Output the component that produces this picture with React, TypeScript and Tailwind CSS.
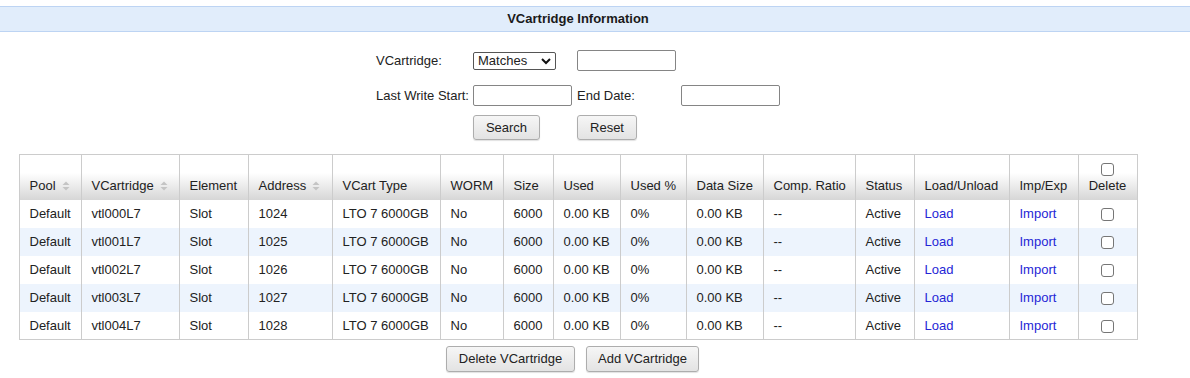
import React from 'react';

const font = { fontFamily: '"Liberation Sans", Arial, sans-serif' };

const columns = [
  { label: 'Pool', width: 62, sort: true },
  { label: 'VCartridge', width: 98, sort: true },
  { label: 'Element', width: 69 },
  { label: 'Address', width: 84, sort: true },
  { label: 'VCart Type', width: 108 },
  { label: 'WORM', width: 63 },
  { label: 'Size', width: 50 },
  { label: 'Used', width: 67 },
  { label: 'Used %', width: 66 },
  { label: 'Data Size', width: 77 },
  { label: 'Comp. Ratio', width: 92 },
  { label: 'Status', width: 59 },
  { label: 'Load/Unload', width: 95 },
  { label: 'Imp/Exp', width: 69 },
  { label: 'Delete', width: 59, check: true },
];

const rows = [0, 1, 2, 3, 4].map((i) => ({
  pool: 'Default',
  name: `vtl00${i}L7`,
  element: 'Slot',
  address: String(1024 + i),
  type: 'LTO 7 6000GB',
  worm: 'No',
  size: '6000',
  used: '0.00 KB',
  usedPct: '0%',
  dataSize: '0.00 KB',
  ratio: '--',
  status: 'Active',
}));

function SortIcon() {
  return (
    <svg width="8" height="10" viewBox="0 0 8 10" className="inline-block ml-[6px] align-[-1px]">
      <path d="M4 0.5 L7.5 4 L0.5 4 Z" fill="#c4c4c4" />
      <path d="M4 9.5 L7.5 6 L0.5 6 Z" fill="#c4c4c4" />
    </svg>
  );
}

function Checkbox() {
  return (
    <span className="inline-block w-[13px] h-[13px] border border-[#767676] rounded-[3px] bg-white align-middle" />
  );
}

function Button({ children, className }: { children: React.ReactNode; className?: string }) {
  return (
    <button
      className={
        'h-[25px] px-0 whitespace-nowrap border border-[#adadad] rounded-[3px] bg-[linear-gradient(to_bottom,#f6f6f6,#e3e3e3)] shadow-[0_1px_1px_rgba(0,0,0,0.12)] text-[13px] text-[#222] ' +
        (className ?? '')
      }
    >
      {children}
    </button>
  );
}

function TextInput({ className }: { className?: string }) {
  return (
    <div className={'w-[99px] h-[21px] border border-[#858585] rounded-[2px] bg-white ' + (className ?? '')} />
  );
}

export default function App() {
  return (
    <div className="w-[1190px] h-[378px] bg-white text-[13px] text-[#222] overflow-hidden" style={font}>
      {/* Title bar */}
      <div className="mt-[6px] h-[26px] bg-[#e1edfb] border-y border-[#bdd4f3]">
        <div className="w-[1156px] h-full flex items-center justify-center font-bold text-[13px] text-[#1a1a1a]">
          VCartridge Information
        </div>
      </div>

      <div className="w-[1156px]">
        {/* Search form */}
        <div className="mt-[18px] mx-auto w-[404px] grid grid-cols-[97px_104px_104px_99px] grid-rows-[21px_21px_25px] gap-y-[14px]">
          <div className="flex items-center">VCartridge:</div>
          <div className="flex items-center">
            <div className="relative w-[83px] h-[18px] border border-[#555] rounded-[2px] bg-white flex items-center pl-[4px]">
              <span>Matches</span>
              <svg width="10" height="7" viewBox="0 0 10 7" className="absolute right-[4px] top-[5px]">
                <path d="M1 1 L5 5 L9 1" stroke="#111" strokeWidth="2" fill="none" />
              </svg>
            </div>
          </div>
          <div className="flex items-center">
            <TextInput />
          </div>
          <div />

          <div className="flex items-center">Last Write Start:</div>
          <div className="flex items-center">
            <TextInput />
          </div>
          <div className="flex items-center">End Date:</div>
          <div className="flex items-center">
            <TextInput />
          </div>

          <div className="-mt-[5px]" />
          <div className="-mt-[5px]">
            <Button className="w-[67px]">Search</Button>
          </div>
          <div className="-mt-[5px]">
            <Button className="w-[60px]">Reset</Button>
          </div>
          <div />
        </div>

        {/* Table */}
        <table className="mt-[9px] mx-auto w-[1118px] table-fixed border-collapse border border-[#cccccc]">
          <colgroup>
            {columns.map((c) => (
              <col key={c.label} style={{ width: c.width }} />
            ))}
          </colgroup>
          <thead>
            <tr className="h-[45px] bg-[linear-gradient(to_bottom,#ffffff_0%,#ffffff_40%,#d6d6d6_100%)]">
              {columns.map((c) => (
                <th
                  key={c.label}
                  className={
                    'border-x border-[#cccccc] font-normal align-bottom pb-[4px] whitespace-nowrap ' +
                    (c.check ? 'text-center px-0' : 'text-left px-[10px]')
                  }
                >
                  {c.check ? (
                    <div className="flex flex-col items-center">
                      <Checkbox />
                      <span>{c.label}</span>
                    </div>
                  ) : (
                    <>
                      {c.label}
                      {c.sort && <SortIcon />}
                    </>
                  )}
                </th>
              ))}
            </tr>
          </thead>
          <tbody>
            {rows.map((r, i) => (
              <tr key={r.name} className={'h-[28px] ' + (i % 2 === 1 ? 'bg-[#edf4fd]' : 'bg-white')}>
                {[r.pool, r.name, r.element, r.address, r.type, r.worm, r.size, r.used, r.usedPct, r.dataSize, r.ratio, r.status].map(
                  (v, j) => (
                    <td key={j} className="border-x border-[#cccccc] px-[10px] whitespace-nowrap">
                      {v}
                    </td>
                  )
                )}
                <td className="border-x border-[#cccccc] px-[10px] text-[#2525d6]">Load</td>
                <td className="border-x border-[#cccccc] px-[10px] text-[#2525d6]">Import</td>
                <td className="border-x border-[#cccccc] text-center">
                  <Checkbox />
                </td>
              </tr>
            ))}
          </tbody>
        </table>

        {/* Actions */}
        <div className="mt-[6px] pr-[11px] flex justify-center gap-[11px]">
          <Button className="h-[26px] w-[129px]">Delete VCartridge</Button>
          <Button className="h-[26px] w-[113px]">Add VCartridge</Button>
        </div>
      </div>
    </div>
  );
}
